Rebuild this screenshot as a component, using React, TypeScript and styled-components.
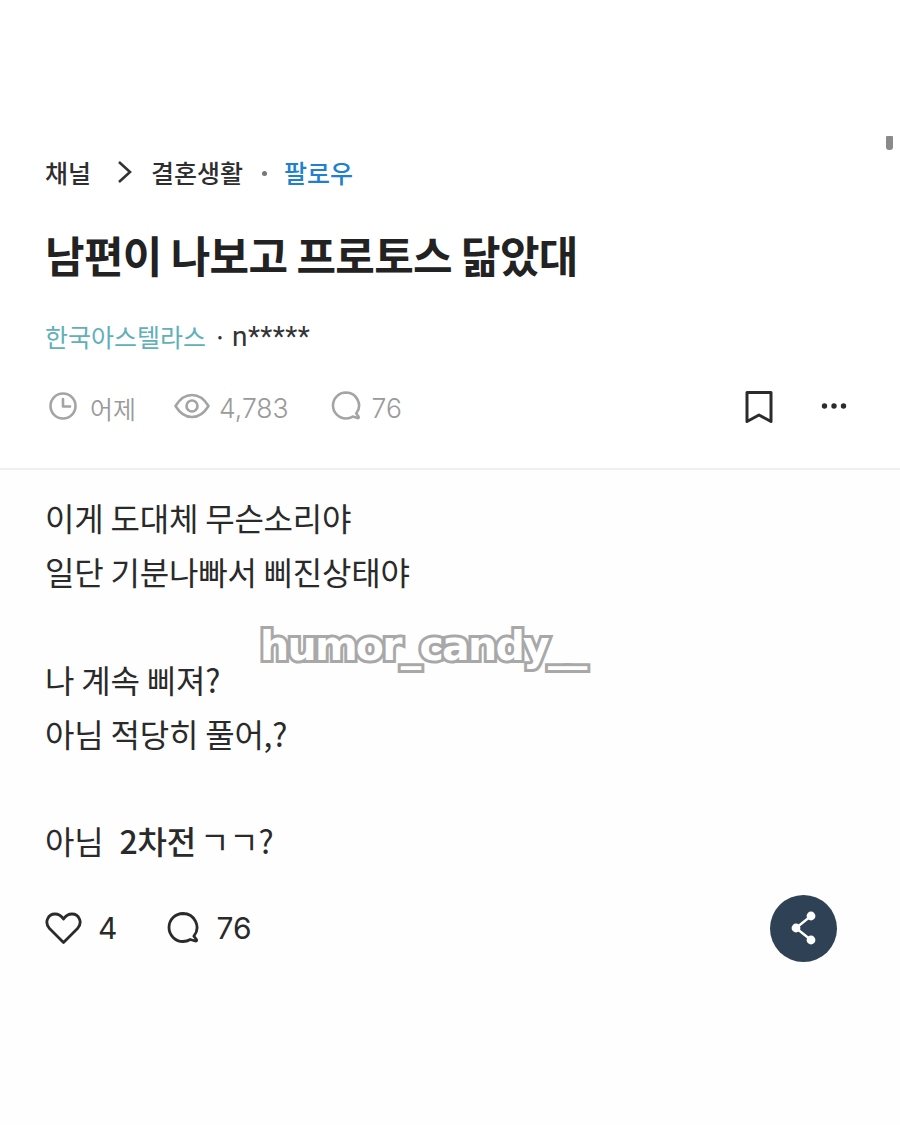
import React from 'react';
import styled, { createGlobalStyle } from 'styled-components';

const GlobalStyle = createGlobalStyle`
  html, body {
    margin: 0;
    padding: 0;
    background: #fff;
  }
  body {
    font-family: "Noto Sans CJK KR", "Noto Sans", sans-serif;
  }
`;

const Page = styled.div`
  position: relative;
  width: 900px;
  height: 1125px;
  overflow: hidden;
  background: #fff;
`;

const ScrollThumb = styled.div`
  position: absolute;
  top: 136px;
  left: 886px;
  width: 7px;
  height: 14px;
  border-radius: 1px 1px 3px 3px;
  background: #8a8a8a;
`;

const Header = styled.header`
  padding: 149px 45px 0;
  height: 470px;
  box-sizing: border-box;
  border-bottom: 2px solid #efefef;
`;

const Breadcrumb = styled.nav`
  display: flex;
  align-items: center;
  height: 46px;
  font-size: 25px;
  font-weight: 500;
  color: #2e2e2e;
`;

const Chevron = styled.svg`
  width: 18px;
  height: 26px;
  margin: 0 17px 0 25px;
  fill: none;
  stroke: #333;
  stroke-width: 2.6;
`;

const Dot = styled.span`
  width: 5px;
  height: 5px;
  border-radius: 50%;
  background: #777;
  margin: 2px 17px 0 19px;
`;

const Follow = styled.span`
  color: #1f7fd0;
`;

const Title = styled.h1`
  margin: 28px 0 0;
  font-size: 43px;
  line-height: 62px;
  font-weight: 700;
  letter-spacing: -0.68px;
  color: #222;
`;

const Author = styled.div`
  display: flex;
  align-items: center;
  margin-top: 31px;
  height: 40px;
  font-size: 25px;
`;

const Company = styled.span`
  color: #5fb0b7;
`;

const Separator = styled.span`
  margin-left: 7px;
  color: #333;
`;

const Masked = styled.span`
  margin-left: 5px;
  color: #333;
  font-size: 28px;
  font-family: "Roboto", "Noto Sans", sans-serif;
  letter-spacing: 0.4px;
`;

const MetaRow = styled.div`
  display: flex;
  align-items: center;
  margin-top: 30px;
  height: 40px;
`;

const MetaItem = styled.div<{ $gap: number; $after: number }>`
  display: flex;
  align-items: center;
  gap: ${(p) => p.$gap}px;
  margin-right: ${(p) => p.$after}px;
  color: #9a9a9a;
  font-family: "Inter", "Noto Sans CJK KR", sans-serif;
  font-weight: 350;
`;

const MetaText = styled.span<{ $size: number }>`
  padding-top: 4px;
  font-size: ${(p) => p.$size}px;
`;

const MetaIcon = styled.svg`
  fill: none;
  stroke: #a4a4a4;
  stroke-width: 2.6;
  stroke-linecap: round;
  stroke-linejoin: round;
`;

const Actions = styled.div`
  display: flex;
  align-items: center;
  gap: 47px;
  margin-left: auto;
  margin-right: 8px;
`;

const DarkIcon = styled.svg`
  fill: none;
  stroke: #2b2b2b;
  stroke-width: 3;
  stroke-linejoin: round;
  stroke-linecap: round;
`;

const Body = styled.main`
  padding: 20px 45px 0;
  background: #fefefe;
  height: 655px;
`;

const Line = styled.p<{ $spaced?: boolean }>`
  margin: ${(p) => (p.$spaced ? '53.5px' : '0')} 0 0;
  height: 54px;
  line-height: 54px;
  font-size: 32px;
  letter-spacing: -0.2px;
  color: #2a2a2a;
`;

const Strong = styled.strong`
  font-weight: 500;
  margin-left: 9px;
  margin-right: -3px;
`;

const Watermark = styled.div`
  position: absolute;
  top: 618px;
  left: 260px;
  font-family: "DejaVu Sans", sans-serif;
  font-weight: 700;
  font-size: 41px;
  line-height: 56px;
  letter-spacing: -1.75px;
  color: #fff;
  -webkit-text-stroke: 6px #a8a8a8;
  paint-order: stroke fill;
`;

const Footer = styled.div`
  display: flex;
  align-items: center;
  margin-top: 27px;
  height: 68px;
`;

const Count = styled.div<{ $after: number }>`
  display: flex;
  align-items: center;
  gap: 16px;
  margin-right: ${(p) => p.$after}px;
  font-size: 30px;
  color: #2a2a2a;
  font-family: "Inter", "Noto Sans CJK KR", sans-serif;
`;

const ShareButton = styled.button`
  display: flex;
  align-items: center;
  justify-content: center;
  width: 67px;
  height: 67px;
  margin-left: auto;
  margin-right: 18px;
  padding: 0;
  border: 0;
  border-radius: 50%;
  background: #2f4155;
`;

const App: React.FC = () => {
  return (
    <Page>
      <GlobalStyle />
      <ScrollThumb />
      <Header>
        <Breadcrumb>
          <span>채널</span>
          <Chevron viewBox="0 0 18 26">
            <path d="M3 3l11 10L3 23" />
          </Chevron>
          <span>결혼생활</span>
          <Dot />
          <Follow>팔로우</Follow>
        </Breadcrumb>
        <Title>남편이 나보고 프로토스 닮았대</Title>
        <Author>
          <Company>한국아스텔라스</Company>
          <Separator>·</Separator>
          <Masked>n*****</Masked>
        </Author>
        <MetaRow>
          <MetaItem $gap={12} $after={38}>
            <MetaIcon width="30" height="30" viewBox="0 0 30 30" style={{ marginLeft: 3 }}>
              <circle cx="15" cy="15" r="12.5" />
              <path d="M15 8v7.5h7" />
            </MetaIcon>
            <MetaText $size={25}>어제</MetaText>
          </MetaItem>
          <MetaItem $gap={9} $after={41}>
            <MetaIcon width="36" height="26" viewBox="0 0 36 26">
              <path d="M1.5 13C6 5.5 11.500 2 18 2s12 3.500 16.500 11C30 20.500 24.500 24 18 24S6 20.500 1.500 13z" />
              <circle cx="18" cy="13" r="5.5" />
            </MetaIcon>
            <MetaText $size={26.5}>4,783</MetaText>
          </MetaItem>
          <MetaItem $gap={10} $after={0}>
            <MetaIcon width="32" height="32" viewBox="0 0 32 32">
              <path d="M16 2.500a13 13 0 1 0 0 26c2.600 0 5-.7 6.800-1.900l4.700 1.400c1 .3 1.600-.5 1-1.400l-2.300-3.100A13 13 0 0 0 16 2.500z" />
            </MetaIcon>
            <MetaText $size={26.5}>76</MetaText>
          </MetaItem>
          <Actions>
            <DarkIcon width="30" height="34" viewBox="0 0 30 34" style={{ marginTop: 2 }}>
              <path d="M3 2.500h24v29l-12-6.500-12 6.500z" />
            </DarkIcon>
            <svg width="26" height="8" viewBox="0 0 26 8">
              <circle cx="3.5" cy="4" r="2.7" fill="#2b2b2b" />
              <circle cx="13" cy="4" r="2.7" fill="#2b2b2b" />
              <circle cx="22.5" cy="4" r="2.7" fill="#2b2b2b" />
            </svg>
          </Actions>
        </MetaRow>
      </Header>
      <Body>
        <Line>이게 도대체 무슨소리야</Line>
        <Line>일단 기분나빠서 삐진상태야</Line>
        <Line $spaced>나 계속 삐져?</Line>
        <Line>아님 적당히 풀어,?</Line>
        <Line $spaced>
          아님 <Strong>2차전</Strong> ㄱㄱ?
        </Line>
        <Footer>
          <Count $after={49}>
            <DarkIcon width="37" height="33" viewBox="0 0 37 33" style={{ strokeWidth: 2.8 }}>
              <path d="M18.500 30.500L4.500 16.500C-1 10.500 3 2 10 2c4 0 6.500 2 8.500 5 2-3 4.500-5 8.500-5 7 0 11 8.500 5.500 14.500z" />
            </DarkIcon>
            4
          </Count>
          <Count $after={0}>
            <DarkIcon width="34" height="34" viewBox="0 0 34 34" style={{ strokeWidth: 2.8 }}>
              <path d="M17 2.500a14 14 0 1 0 0 28c2.800 0 5.300-.8 7.300-2l5 1.500c1.100.3 1.700-.5 1.100-1.500l-2.500-3.300A14 14 0 0 0 17 2.500z" />
            </DarkIcon>
            76
          </Count>
          <ShareButton aria-label="share">
            <svg width="28" height="34" viewBox="0 0 28 34">
              <path d="M6 17L21 5M6 17l15 12" stroke="#fff" strokeWidth="2.4" fill="none" />
              <circle cx="6" cy="17" r="4.4" fill="#fff" />
              <circle cx="21" cy="5" r="4.4" fill="#fff" />
              <circle cx="21" cy="29" r="4.4" fill="#fff" />
            </svg>
          </ShareButton>
        </Footer>
      </Body>
      <Watermark>humor_candy__</Watermark>
    </Page>
  );
};

export default App;
